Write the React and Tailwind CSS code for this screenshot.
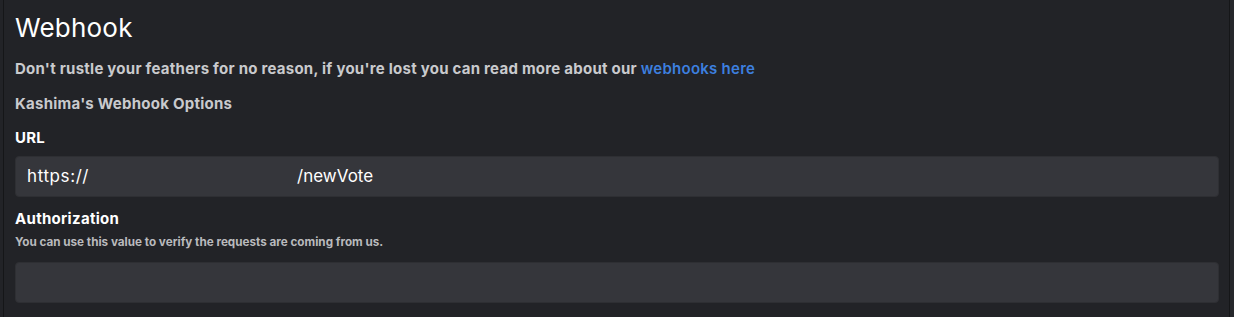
import React from 'react';

const App = () => {
    return (
        <div className="w-[1234px] h-[317px] bg-[#222327] flex overflow-hidden" style={{ fontFamily: 'Inter, "Noto Sans", sans-serif' }}>
            <div className="w-[3px] bg-[#222327]"></div>
            <div className="w-px bg-[#151618]"></div>
            <div className="flex-1 pl-[11px] pr-[6px] pt-[12px]">
                <h1 className="text-[26px] leading-[32px] text-white font-normal tracking-[0.2px]">Webhook</h1>
                <p className="mt-[15px] text-[15px] leading-[20px] font-bold tracking-[0.25px] text-[#c9cacd]">
                    Don't rustle your feathers for no reason, if you're lost you can read more about our{' '}
                    <a href="#" className="text-[#3d7fdf] font-semibold">webhooks here</a>
                </p>
                <p className="mt-[15px] text-[15px] leading-[20px] font-bold tracking-[0.25px] text-[#c9cacd]">Kashima's Webhook Options</p>
                <label className="block mt-[14px] text-[15px] leading-[20px] font-bold tracking-[0.25px] text-white">URL</label>
                <div className="mt-[8px] h-[41px] rounded-[4px] bg-[#35363b] border border-[#2e2f33] flex items-center px-[11px] text-[17px] text-white">
                    <span className="tracking-[0.6px]">https://</span>
                    <span className="w-[208px]"></span>
                    <span>/newVote</span>
                </div>
                <label className="block mt-[12px] text-[15px] leading-[20px] font-bold tracking-[0.3px] text-white">Authorization</label>
                <p className="mt-[5px] text-[11.7px] leading-[16px] font-bold text-[#b9babd]">You can use this value to verify the requests are coming from us.</p>
                <div className="mt-[12px] h-[41px] rounded-[4px] bg-[#35363b] border border-[#2e2f33]"></div>
            </div>
            <div className="w-[4px] bg-[#222327]"></div>
            <div className="w-px bg-[#151618]"></div>
            <div className="w-[4px] bg-[#26272b]"></div>
        </div>
    );
};

export default App;
